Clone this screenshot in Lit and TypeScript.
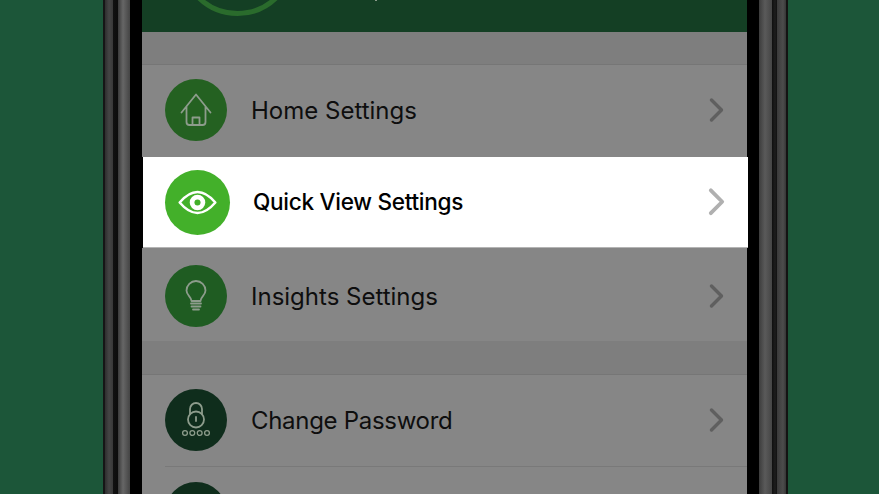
import { LitElement, html, css, svg } from 'lit'
import { customElement } from 'lit/decorators.js'

const icons = {
  home: svg`<path d="M-14.5 2.5 L0 -15.5 L14.5 2.5 M-9.5 -3 V12 Q-9.5 15 -6.5 15 H6.5 Q9.5 15 9.5 12 V-3 M-3.5 15 V7.5 H3.5 V15" />`,
  eye: svg`<path d="M-17 0 Q0 -20 17 0 Q0 20 -17 0 Z" stroke-width="2.4" /><circle r="7.4" fill="#fff" stroke="none" /><circle r="2.9" fill="#43b02a" stroke="none" />`,
  bulb: svg`<path d="M-4.5 5 C-4.5 0.5 -9.5 -0.5 -9.5 -5.5 A9.5 9.5 0 0 1 9.5 -5.5 C9.5 -0.5 4.5 0.5 4.5 5 Z M-5 7.5 H5 M-4.5 10.5 H4.5 M-3 13.5 H3" />`,
  lock: svg`<circle cy="-0.5" r="8" /><path d="M-6 -6 V-11 A6 6 0 0 1 6 -11 V-6 M0 -3 V1" /><g stroke-width="1.3"><circle cx="-11" cy="13" r="2.4" /><circle cx="-3.7" cy="13" r="2.4" /><circle cx="3.7" cy="13" r="2.4" /><circle cx="11" cy="13" r="2.4" /></g>`,
}

@customElement('app-root')
export class AppRoot extends LitElement {
  static styles = css`
    :host {
      display: block;
      width: 879px;
      height: 494px;
      overflow: hidden;
      background: #1c5639;
      font-family: Inter, 'Liberation Sans', sans-serif;
    }

    .stage {
      display: flex;
      height: 494px;
      padding-left: 103px;
    }

    .bezel {
      flex: none;
      height: 100%;
    }

    .bezel.left {
      width: 39px;
      background: linear-gradient(90deg,
        #161616 0 2px,
        #2e2e2e 2px, #454545 6px, #383838 10px,
        #111 10px, #0c0c0c 15px,
        #3a3a3a 15px, #666 20px, #444 27px,
        #000 27px);
    }

    .bezel.right {
      width: 40px;
      background: linear-gradient(90deg,
        #000 0 11px,
        #3c3c3c 11px, #5a5a5a 17px, #454545 24px,
        #0f0f0f 24px, #1d1d1d 27px, #111 29px,
        #3a3a3a 29px, #4c4c4c 35px, #363636 38px,
        #131313 38px);
    }

    .screen {
      flex: none;
      width: 606px;
      background: #000;
    }

    .screen > * {
      margin-right: 1px;
    }

    .header {
      display: block;
      height: 32px;
      background: #143f24;
    }

    .header svg {
      display: block;
    }

    .gap {
      height: 32px;
      background: #7e7e7e;
    }

    .gap.second {
      height: 33px;
    }

    .row {
      display: flex;
      align-items: center;
      height: 92px;
      padding: 0 23px;
      box-sizing: border-box;
      background: #868686;
      border-top: 1px solid #767676;
    }

    .row.first {
      height: 93px;
      padding-bottom: 2px;
    }

    .row.plain {
      border-top: none;
    }

    .row.third {
      height: 93px;
      padding-top: 3px;
    }

    .row.lower {
      padding-bottom: 1px;
    }

    .row.active {
      height: 91px;
      margin: 0 0 0 1px;
      padding-left: 22px;
      padding-right: 23px;
      background: #fff;
      border-top: none;
      border-bottom: 1px solid #b4b4b4;
    }

    .badge {
      flex: none;
      width: 62px;
      height: 62px;
      border-radius: 50%;
    }

    .active .badge {
      width: 65px;
      height: 65px;
    }

    .badge svg {
      display: block;
      width: 100%;
      height: 100%;
      fill: none;
      stroke: #8d9c8c;
      stroke-width: 1.8;
      stroke-linecap: round;
      stroke-linejoin: round;
    }

    .active .badge svg {
      stroke: #fff;
    }

    .label {
      flex: 1;
      margin-left: 24px;
      padding-top: 2px;
      font-size: 24px;
      line-height: 30px;
      color: #0e0e0e;
    }

    .lower .label {
      letter-spacing: -0.3px;
    }

    .active .label {
      margin-left: 23px;
      padding-top: 0;
      color: #000;
      font-size: 22.6px;
      font-weight: 500;
      letter-spacing: -0.3px;
    }

    .chev {
      flex: none;
      width: 15px;
      height: 26px;
      fill: none;
      stroke: #5f5f5f;
      stroke-width: 3.4;
      stroke-linecap: round;
      stroke-linejoin: round;
    }

    .active .chev {
      width: 17px;
      height: 29.5px;
      stroke: #b0b0b0;
    }

    .sep {
      height: 1px;
      background: linear-gradient(90deg, #868686 23px, #797979 23px);
    }
  `

  private row(label: string, icon: keyof typeof icons, color: string, kind = '') {
    return html`
      <div class="row ${kind}">
        <div class="badge" style="background:${color}">
          <svg viewBox="-31 -31 62 62">${icons[icon]}</svg>
        </div>
        <div class="label">${label}</div>
        <svg class="chev" viewBox="0 0 15 26"><path d="M2.5 3 L12.5 13 L2.5 23" /></svg>
      </div>
    `
  }

  render() {
    return html`
      <div class="stage">
        <div class="bezel left"></div>
        <div class="screen">
          <div class="header">
            <svg width="605" height="32" viewBox="0 0 605 32">
              <circle cx="95.5" cy="-42" r="55.5" fill="none" stroke="#2a6b2c" stroke-width="5" />
              <rect x="233" y="0" width="2" height="1" fill="#8a9a8a" />
            </svg>
          </div>
          <div class="gap"></div>
          ${this.row('Home Settings', 'home', '#246121', 'first')}
          ${this.row('Quick View Settings', 'eye', '#43b02a', 'active')}
          ${this.row('Insights Settings', 'bulb', '#1f5c22', 'plain third')}
          <div class="gap second"></div>
          ${this.row('Change Password', 'lock', '#0f2d1c', 'lower')}
          <div class="sep"></div>
          ${this.row('', 'lock', '#0f2d1c', 'plain')}
        </div>
        <div class="bezel right"></div>
      </div>
    `
  }
}

declare global {
  interface HTMLElementTagNameMap {
    'app-root': AppRoot
  }
}
